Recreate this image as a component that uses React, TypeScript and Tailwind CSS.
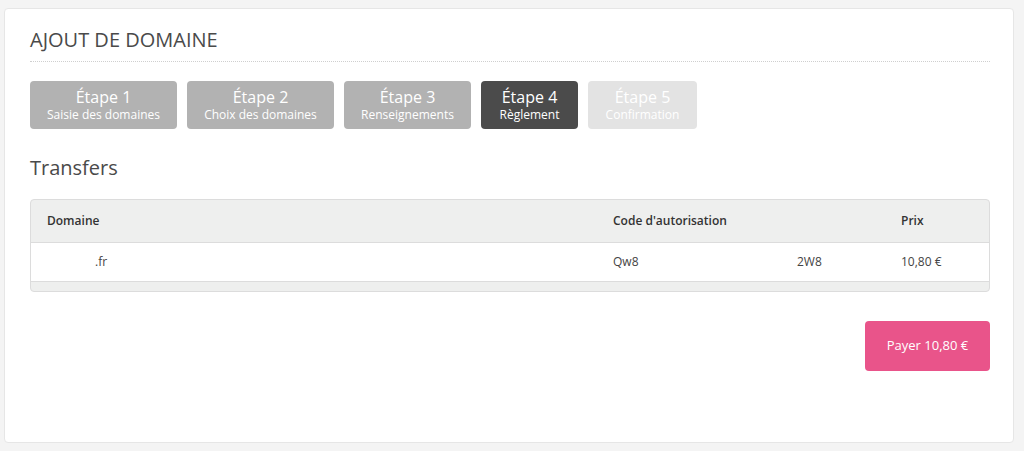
const steps = [
  { title: 'Étape 1', label: 'Saisie des domaines', state: 'done', width: 'w-[147px]' },
  { title: 'Étape 2', label: 'Choix des domaines', state: 'done', width: 'w-[147px]' },
  { title: 'Étape 3', label: 'Renseignements', state: 'done', width: 'w-[127px]' },
  { title: 'Étape 4', label: 'Règlement', state: 'active', width: 'w-[97px]' },
  { title: 'Étape 5', label: 'Confirmation', state: 'todo', width: 'w-[109px]' }
];

const stepColors: Record<string, string> = {
  done: 'bg-[#b2b2b2] text-white',
  active: 'bg-[#4b4b4b] text-white',
  todo: 'bg-[#e3e3e3] text-white'
};

const gridCols = 'grid grid-cols-[566px_184px_104px_1fr]';

export default function App() {
  return (
    <div className="min-h-[451px] bg-[#f4f4f4] pt-2 pl-1 pr-[10px] font-['Open_Sans',sans-serif] text-[#444]">
      <div className="h-[435px] rounded border border-[#e6e6e6] bg-white pl-[25px] pr-[23px] pt-[17px]">
        <h1 className="text-[20px] leading-[28px] font-normal text-[#4a4a4a]">AJOUT DE DOMAINE</h1>
        <div className="mt-[7px] border-t border-dotted border-[#cfcfcf]" />

        <div className="mt-[19px] flex gap-[10px]">
          {steps.map((step) => (
            <div
              key={step.title}
              className={`flex h-[48px] flex-col items-center justify-center rounded ${step.width} ${stepColors[step.state]}`}
            >
              <span className="text-[16px] leading-[20px]">{step.title}</span>
              <span className="text-[12px] leading-[16px]">{step.label}</span>
            </div>
          ))}
        </div>

        <h2 className="mt-[26px] text-[20px] leading-[26px] font-normal text-[#4a4a4a]">Transfers</h2>

        <div className="mt-[18px] overflow-hidden rounded border border-[#dcdcdc] bg-[#eeefee]">
          <div className={`${gridCols} h-[43px] items-center border-b border-[#dcdcdc] pl-[16px] text-[12px] font-semibold text-[#333]`}>
            <span>Domaine</span>
            <span>Code d'autorisation</span>
            <span />
            <span>Prix</span>
          </div>
          <div className={`${gridCols} h-[39px] items-center border-b border-[#dcdcdc] bg-white pl-[16px] text-[12px] text-[#444]`}>
            <span className="pl-[48px]">.fr</span>
            <span>Qw8</span>
            <span>2W8</span>
            <span>10,80 €</span>
          </div>
          <div className="h-[9px]" />
        </div>

        <div className="mt-[29px] flex justify-end">
          <button className="h-[50px] w-[125px] rounded bg-[#e9548a] text-[13px] text-white">Payer 10,80 €</button>
        </div>
      </div>
    </div>
  );
}
